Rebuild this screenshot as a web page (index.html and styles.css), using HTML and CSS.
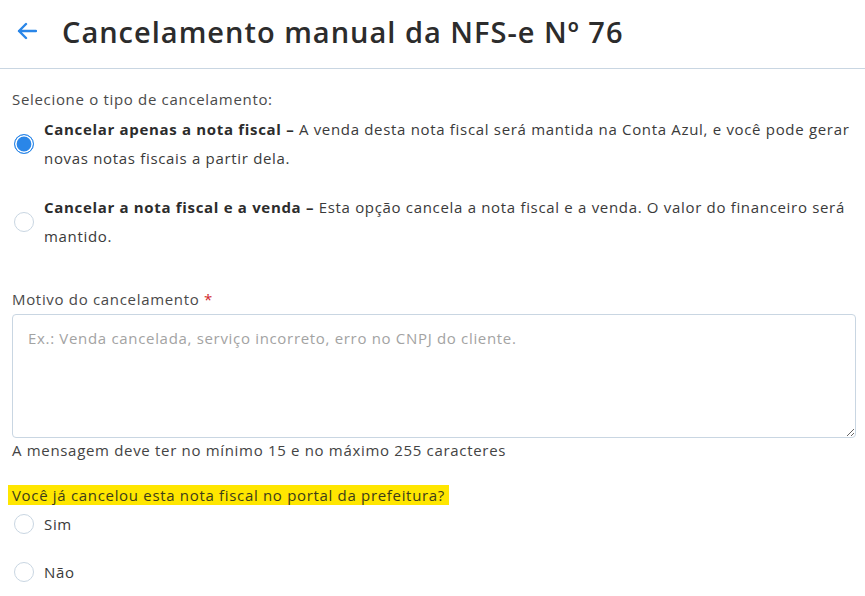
FILE: index.html
```html
<!DOCTYPE html>
<html lang="pt-BR">
<head>
<meta charset="utf-8">
<link rel="stylesheet" href="styles.css">
</head>
<body>
<header class="header">
  <button class="back" aria-label="Voltar">
    <svg width="20" height="18" viewBox="0 0 20 18"><path d="M19 9H2M9 2L2 9l7 7" fill="none" stroke="#2a86e8" stroke-width="2.4" stroke-linecap="round" stroke-linejoin="round"/></svg>
  </button>
  <h1 class="title">Cancelamento manual da NFS-e Nº 76</h1>
</header>
<main class="content">
  <p class="label">Selecione o tipo de cancelamento:</p>
  <div class="options">
    <label class="option">
      <span class="radio checked"></span>
      <span class="option-text"><b>Cancelar apenas a nota fiscal –</b> A venda desta nota fiscal será mantida na Conta Azul, e você pode gerar novas notas fiscais a partir dela.</span>
    </label>
    <label class="option">
      <span class="radio"></span>
      <span class="option-text"><b>Cancelar a nota fiscal e a venda –</b> Esta opção cancela a nota fiscal e a venda. O valor do financeiro será mantido.</span>
    </label>
  </div>
  <p class="label field-label">Motivo do cancelamento <span class="req">*</span></p>
  <textarea class="textarea" placeholder="Ex.: Venda cancelada, serviço incorreto, erro no CNPJ do cliente."></textarea>
  <p class="hint">A mensagem deve ter no mínimo 15 e no máximo 255 caracteres</p>
  <p class="question"><span class="mark">Você já cancelou esta nota fiscal no portal da prefeitura?</span></p>
  <div class="choices">
    <label class="choice"><span class="radio"></span><span>Sim</span></label>
    <label class="choice"><span class="radio"></span><span>Não</span></label>
  </div>
</main>
</body>
</html>
```
FILE: styles.css
```css
* { box-sizing: border-box; }
html, body { margin: 0; padding: 0; background: #fff; }
body {
  font-family: "Open Sans", "Noto Sans", sans-serif;
  color: #3a3a3a;
  font-size: 15px;
  letter-spacing: 0.68px;
}
.header {
  height: 69px;
  border-bottom: 1px solid #c9d6e2;
  display: flex;
  align-items: center;
  padding: 0 0 6px 17px;
}
.back {
  border: 0;
  background: none;
  padding: 0;
  width: 20px;
  height: 18px;
  margin-right: 25px;
  display: flex;
}
.title {
  margin: 0;
  font-size: 29px;
  font-weight: 600;
  color: #2c2c2c;
  letter-spacing: 1px;
}
.content { padding: 0 9px 0 12px; }
.label { margin: 19px 0 0; line-height: 22px; color: #4a4a4a; }
.options { margin-top: 5px; }
.option {
  display: flex;
  align-items: center;
  gap: 10px;
  padding-left: 2px;
  margin-bottom: 20px;
}
.option-text { line-height: 29px; color: #3a3a3a; }
.option-text b { font-weight: 700; color: #2c2c2c; }
.radio {
  flex: none;
  width: 20px;
  height: 20px;
  border-radius: 50%;
  border: 1px solid #c9d6e2;
  background: #fff;
}
.radio.checked {
  border: 1.5px solid #2a86e8;
  background: #2a86e8;
  box-shadow: inset 0 0 0 1.6px #fff;
}
.field-label { margin-top: 37px; }
.req { color: #d0262c; }
.textarea {
  display: block;
  width: 100%;
  height: 124px;
  margin-top: 4px;
  border: 1px solid #c9d6e2;
  border-radius: 4px;
  padding: 13px 15px;
  font: inherit;
  letter-spacing: 0.68px;
  color: #333;
  resize: vertical;
}
.textarea::placeholder { color: #a3a3a3; }
.hint { margin: 1px 0 0; line-height: 22px; color: #444; }
.question { margin: 24px 0 0 -4px; line-height: 21px; }
.mark { background: #ffe600; padding: 0 4px; color: #3d3d1a; }
.choices { margin-top: -6px; }
.choice {
  display: flex;
  align-items: center;
  gap: 10px;
  padding-left: 2px;
  height: 48px;
}
```
